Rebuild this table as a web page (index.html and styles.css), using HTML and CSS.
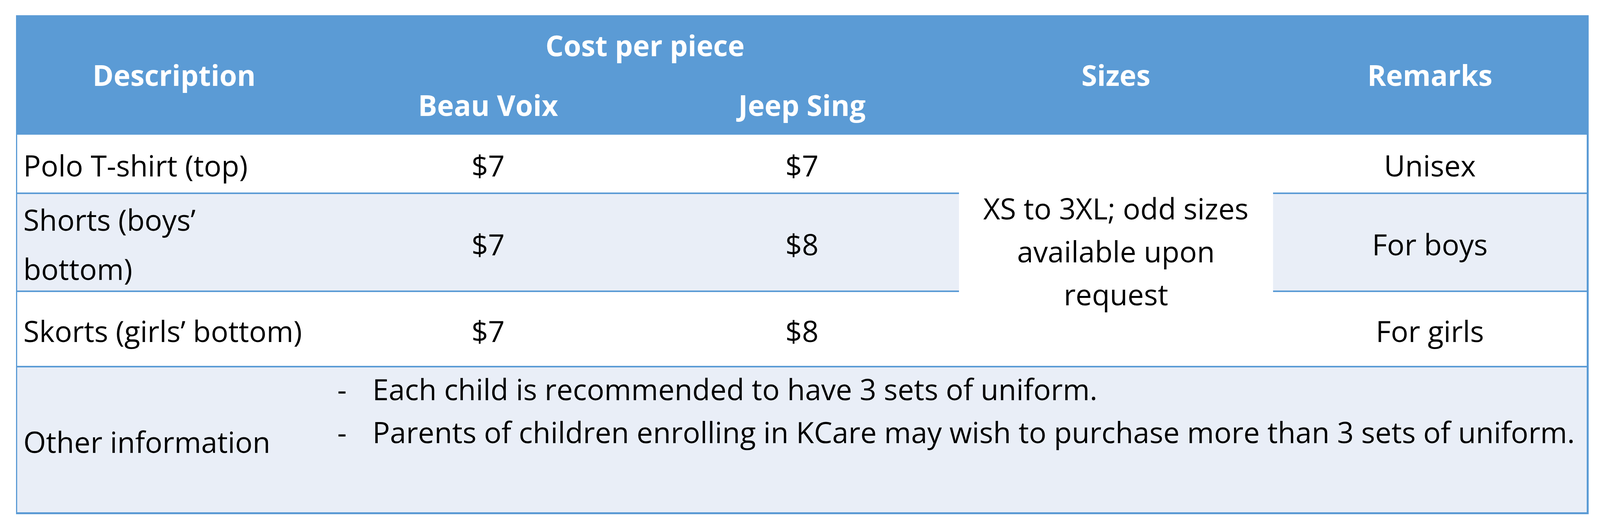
FILE: index.html
```html
<!DOCTYPE html>
<html lang="en">
<head>
<meta charset="utf-8">
<title>Uniform price list</title>
<link rel="stylesheet" href="styles.css">
</head>
<body>
<div class="uniform-table">
  <div class="cell head desc-h">Description</div>
  <div class="cell head cost-h">Cost per piece</div>
  <div class="cell head sizes-h">Sizes</div>
  <div class="cell head remarks-h">Remarks</div>
  <div class="cell head beau-h">Beau Voix</div>
  <div class="cell head jeep-h">Jeep Sing</div>

  <div class="cell left rule">Polo T-shirt (top)</div>
  <div class="cell center rule">$7</div>
  <div class="cell center rule">$7</div>
  <div class="cell center sizes rule">XS to 3XL; odd sizes<br>available upon<br>request</div>
  <div class="cell center rule remarks">Unisex</div>

  <div class="cell left rule band">Shorts (boys’<br>bottom)</div>
  <div class="cell center rule band">$7</div>
  <div class="cell center rule band">$8</div>
  <div class="cell center rule band remarks">For boys</div>

  <div class="cell left rule">Skorts (girls’ bottom)</div>
  <div class="cell center rule">$7</div>
  <div class="cell center rule">$8</div>
  <div class="cell center rule remarks">For girls</div>

  <div class="cell left band">Other information</div>
  <div class="cell notes band">
    <ul class="note-list">
      <li class="note"><span class="dash">-</span><span>Each child is recommended to have 3 sets of uniform.</span></li>
      <li class="note"><span class="dash">-</span><span>Parents of children enrolling in KCare may wish to purchase more than 3 sets of uniform.</span></li>
    </ul>
  </div>
</div>
</body>
</html>
```

FILE: styles.css
```css
* {
  box-sizing: border-box;
}

html,
body {
  margin: 0;
  background: #ffffff;
}

body {
  font-family: "Open Sans", "Noto Sans", sans-serif;
  color: #000000;
}

/* Layout is fluid horizontally: 44px margin and a 4325px table on a 4400px page */
.uniform-table {
  display: grid;
  grid-template-columns: repeat(5, 1fr);
  grid-template-rows: 153px 153px 152px 251px 193px 371px;
  width: 98.3%;
  margin: 39px 0 0 1%;
  border-left: 3px solid #5b9bd5;
  border-right: 5px solid #5b9bd5;
  border-bottom: 5px solid #5b9bd5;
  background: #ffffff;
}

.cell {
  display: flex;
  align-items: center;
  min-width: 0;
  font-size: 1.818vw;
  line-height: 126px;
  padding-top: 8px;
  white-space: nowrap;
}

.head {
  background: #5b9bd5;
  color: #ffffff;
  font-weight: 700;
  font-size: 1.773vw;
  justify-content: center;
  text-align: center;
  padding-top: 0;
}

.desc-h {
  grid-column: 1;
  grid-row: 1 / 3;
}

.cost-h {
  grid-column: 2 / 4;
  grid-row: 1;
}

.sizes-h {
  grid-column: 4;
  grid-row: 1 / 3;
}

.remarks-h {
  grid-column: 5;
  grid-row: 1 / 3;
}

.beau-h {
  grid-column: 2;
  grid-row: 2;
}

.jeep-h {
  grid-column: 3;
  grid-row: 2;
}

.left {
  grid-column: 1;
  padding-left: 0.386vw;
}

.center {
  justify-content: center;
  text-align: center;
}

.remarks {
  grid-column: 5;
}

.rule {
  border-bottom: 4px solid #5b9bd5;
}

.band {
  background: #e9eef7;
}

.sizes {
  grid-column: 4;
  grid-row: 3 / 6;
  line-height: 110px;
  padding-top: 4px;
  background: #ffffff;
}

.notes {
  grid-column: 2 / 6;
  align-items: flex-start;
  padding-top: 0;
  padding-left: 0.386vw;
  line-height: 110px;
}

.note-list {
  list-style: none;
  margin: 0;
  padding: 0;
}

.note {
  display: flex;
}

.dash {
  flex: none;
  width: 2.2vw;
}
```
